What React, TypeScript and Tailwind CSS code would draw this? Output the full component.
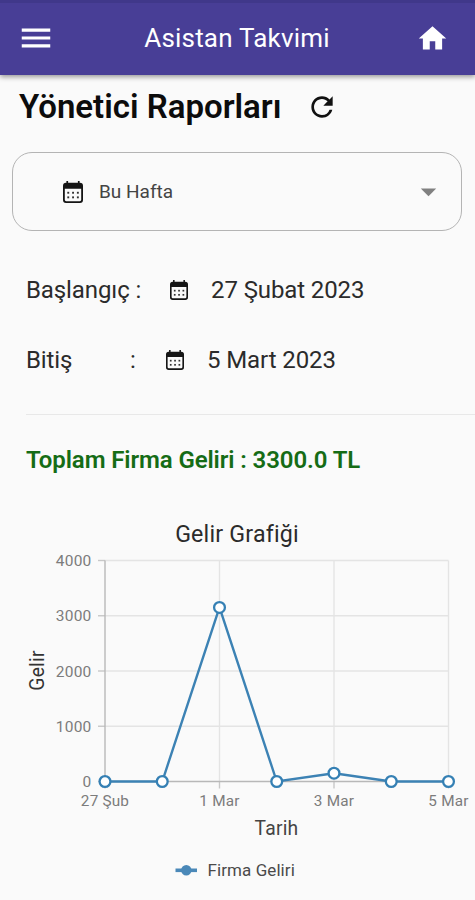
import React, { useState } from 'react';
import { MdArrowDropDown, MdHome, MdMenu, MdRefresh } from 'react-icons/md';

interface IncomePoint {
  label: string;
  value: number;
}

const incomes: IncomePoint[] = [
  { label: '27 Şub', value: 0 },
  { label: '28 Şub', value: 0 },
  { label: '1 Mar', value: 3150 },
  { label: '2 Mar', value: 0 },
  { label: '3 Mar', value: 150 },
  { label: '4 Mar', value: 0 },
  { label: '5 Mar', value: 0 },
];

const CalendarIcon: React.FC<{ className?: string }> = ({ className }) => (
  <svg viewBox="0 0 20 22" className={className}>
    <path
      fillRule="evenodd"
      fill="#151515"
      d="M3.4 0h1.7v1.8h9.8V0h1.7v1.800h.4A3 3 0 0 1 20 4.800v14.200a3 3 0 0 1-3 3H3a3 3 0 0 1-3-3V4.800A3 3 0 0 1 3 1.800h.400zM1.800 7.800v11a1.400 1.400 0 0 0 1.400 1.400h13.600a1.400 1.400 0 0 0 1.400-1.400V7.800z"
    />
    {[4.3, 9.1, 13.9].map((x) =>
      [10.8, 15.4].map((y) => <rect key={`${x}-${y}`} x={x} y={y} width="1.9" height="1.9" fill="#333" />)
    )}
  </svg>
);

// Plot area inside the chart svg
const LEFT = 105;
const RIGHT = 448.5;
const TOP = 50.5;
const BOTTOM = 271.5;
const MAX = 4000;

const IncomeChart: React.FC = () => {
  const step = (RIGHT - LEFT) / (incomes.length - 1);
  const points = incomes.map((p, i) => ({
    ...p,
    x: LEFT + i * step,
    y: BOTTOM - (p.value / MAX) * (BOTTOM - TOP),
  }));

  return (
    <svg width="475" height="390" viewBox="0 0 475 390" className="block">
      <text x="237" y="31.5" textAnchor="middle" fontSize="23.2" letterSpacing="0.2" fill="#2b2b2b">Gelir Grafiği</text>

      {/* Grid */}
      {[0, 1000, 2000, 3000, 4000].map((v) => {
        const y = BOTTOM - (v / MAX) * (BOTTOM - TOP);
        return (
          <g key={v}>
            {v > 0 && <line x1={LEFT} x2={RIGHT} y1={y} y2={y} stroke="#e4e4e4" strokeWidth="1.4" />}
            <line x1={LEFT - 7} x2={LEFT} y1={y} y2={y} stroke="#c8c8c8" strokeWidth="1.4" />
            <text x="91.5" y={y + 5.5} textAnchor="end" fontSize="15.5" letterSpacing="0.2" fill="#7c7c7c">{v}</text>
          </g>
        );
      })}
      {points.filter((_, i) => i % 2 === 0).map((p, i) => (
        <g key={p.label}>
          {i > 0 && <line x1={p.x} x2={p.x} y1={TOP} y2={BOTTOM} stroke="#e4e4e4" strokeWidth="1.4" />}
          <line x1={p.x} x2={p.x} y1={BOTTOM} y2={BOTTOM + 7} stroke="#c8c8c8" strokeWidth="1.4" />
          <text x={p.x} y="296" textAnchor="middle" fontSize="15.3" letterSpacing="0.2" fill="#7c7c7c">{p.label}</text>
        </g>
      ))}
      <line x1={LEFT} x2={LEFT} y1={TOP} y2={BOTTOM} stroke="#b8b8b8" strokeWidth="1.4" />
      <line x1={LEFT} x2={RIGHT} y1={BOTTOM} y2={BOTTOM} stroke="#b8b8b8" strokeWidth="1.4" />

      {/* Series */}
      <polyline points={points.map((p) => `${p.x},${p.y}`).join(' ')} fill="none" stroke="#3c82b4" strokeWidth="2.4" />
      {points.map((p) => (
        <circle key={p.label} cx={p.x} cy={p.y} r="5.4" fill="#fff" stroke="#3580b4" strokeWidth="2.3" />
      ))}

      <text transform="translate(44 160.500) rotate(-90)" textAnchor="middle" fontSize="19.3" letterSpacing="0.2" fill="#333">Gelir</text>
      <text x="276.5" y="325" textAnchor="middle" fontSize="19.3" letterSpacing="0.2" fill="#444">Tarih</text>

      {/* Legend */}
      <line x1="175.5" x2="197" y1="360.3" y2="360.3" stroke="#4a88b8" strokeWidth="3.6" />
      <circle cx="186.3" cy="360.3" r="5.2" fill="#4a88b8" />
      <text x="207.5" y="366" fontSize="17" letterSpacing="0.080" fill="#4a4a4a">Firma Geliri</text>
    </svg>
  );
};

const App: React.FC = () => {
  const [period] = useState('Bu Hafta');

  return (
    <div className="w-[475px] h-[900px] overflow-hidden bg-[#fafafa] font-['Roboto',sans-serif] text-[#2b2b2b]">
      {/* App bar */}
      <header className="h-[75px] flex items-center justify-between border-t-[3px] border-[#40388a] bg-[#483e96] pl-[17px] pr-[26px] pb-[2px] text-white shadow-[0_2px_5px_rgba(0,0,0,0.4)]">
        <button className="w-[38px]"><MdMenu size={38} /></button>
        <span className="ml-[3px] text-[26px] leading-8 tracking-[0.2px]">Asistan Takvimi</span>
        <button><MdHome size={33} /></button>
      </header>

      <div className="h-[77px] pt-3 pl-[19px] flex items-start">
        <h1 className="w-[287px] text-[33px] leading-10 font-semibold text-[#0c0c0c] whitespace-nowrap">Yönetici Raporları</h1>
        <button className="mt-1 text-[#111]"><MdRefresh size={32} /></button>
      </div>

      {/* Period select */}
      <button className="mx-3 h-[79px] w-[450px] flex items-center rounded-[20px] border-[1.5px] border-[#b4b4b4] pl-[50px] pr-[14px]">
        <CalendarIcon className="w-5 h-[22px]" />
        <span className="ml-4 mt-0.5 flex-1 text-left text-[19px] text-[#444]">{period}</span>
        <MdArrowDropDown size={37} className="text-[#808080]" />
      </button>

      <div className="ml-[26px] border-b border-[#e8e8e8] h-[184px] pt-6 text-2xl tracking-[-0.1px]">
        <div className="h-[70px] flex items-center">
          <span className="w-[144px]">Başlangıç :</span>
          <CalendarIcon className="w-[18px] h-5" />
          <span className="ml-[23px]">27 Şubat 2023</span>
        </div>
        <div className="h-[70px] flex items-center">
          <span className="w-[104px]">Bitiş</span>
          <span className="w-[36px]">:</span>
          <CalendarIcon className="w-[18px] h-5" />
          <span className="ml-[23px]">5 Mart 2023</span>
        </div>
      </div>

      <p className="h-[95px] pl-[26px] pt-[27px] text-2xl leading-9 font-semibold tracking-[-0.1px] text-[#156c15]">Toplam Firma Geliri : 3300.0 TL</p>

      <IncomeChart />
    </div>
  );
};

export default App;
